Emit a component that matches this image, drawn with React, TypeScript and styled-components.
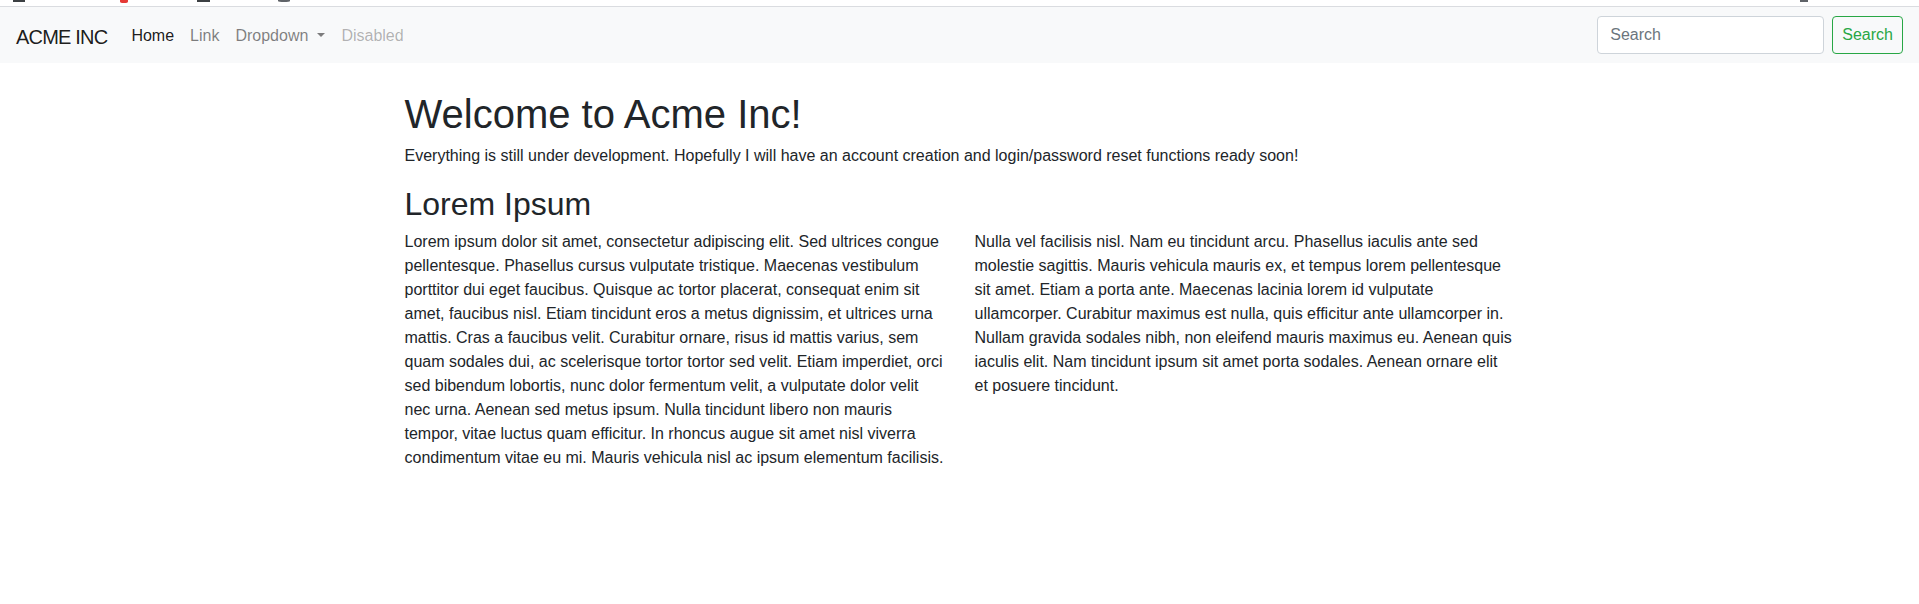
import React from "react";
import styled, { createGlobalStyle } from "styled-components";

const GlobalStyle = createGlobalStyle`
  *, *::before, *::after { box-sizing: border-box; }
  html, body { margin: 0; padding: 0; background: #fff; }
  body {
    font-family: "Segoe UI", "Liberation Sans", Arial, sans-serif;
    font-size: 16px;
    line-height: 1.5;
    color: #212529;
  }
`;

const TopStrip = styled.div`
  height: 7px;
  border-bottom: 1px solid #dadce0;
  display: flex;
  align-items: flex-start;
  overflow: hidden;
  background: #fff;
`;

const StripBit = styled.span<{ $w: number; $ml: number; $c: string; $h?: number; $round?: boolean }>`
  display: block;
  width: ${(p) => p.$w}px;
  height: ${(p) => p.$h ?? 2}px;
  margin-left: ${(p) => p.$ml}px;
  background: ${(p) => p.$c};
  border-radius: ${(p) => (p.$round ? "0 0 50% 50%" : "0")};
`;

const Navbar = styled.nav`
  height: 56px;
  background: #f8f9fa;
  padding: 8px 16px;
  display: flex;
  align-items: center;
`;

const Brand = styled.a`
  font-size: 20px;
  letter-spacing: -0.8px;
  line-height: 30px;
  padding: 7px 0 3px;
  margin-right: 16px;
  color: rgba(0, 0, 0, 0.9);
  text-decoration: none;
  white-space: nowrap;
`;

const NavList = styled.ul`
  display: flex;
  list-style: none;
  margin: 0;
  padding: 0;
  flex: 1;
`;

const NavLink = styled.a<{ $state?: "active" | "disabled" }>`
  display: flex;
  align-items: center;
  padding: 9px 8px 7px;
  line-height: 24px;
  text-decoration: none;
  white-space: nowrap;
  color: ${(p) =>
    p.$state === "active"
      ? "rgba(0,0,0,0.9)"
      : p.$state === "disabled"
      ? "rgba(0,0,0,0.3)"
      : "rgba(0,0,0,0.5)"};
`;

const Caret = styled.span`
  display: inline-block;
  margin-left: 9px;
  margin-top: -2px;
  width: 0;
  height: 0;
  border-top: 4px solid currentColor;
  border-left: 4px solid transparent;
  border-right: 4px solid transparent;
`;

const SearchForm = styled.form`
  display: flex;
  align-items: center;
`;

const SearchInput = styled.input`
  width: 227px;
  height: 38px;
  margin-right: 8px;
  padding: 6px 12px;
  font: inherit;
  font-size: 16px;
  color: #495057;
  background: #fff;
  border: 1px solid #ced4da;
  border-radius: 4px;
  outline: none;
  &::placeholder {
    color: #6c757d;
  }
`;

const OutlineButton = styled.button`
  height: 38px;
  padding: 0 9px;
  font: inherit;
  font-size: 16px;
  color: #28a745;
  background: transparent;
  border: 1px solid #28a745;
  border-radius: 4px;
`;

const Container = styled.main`
  max-width: 1140px;
  margin: 0 auto;
  padding: 27px 15px 0;
`;

const Title = styled.h1`
  font-size: 40px;
  font-weight: 400;
  line-height: 48px;
  margin: 0 0 6px;
`;

const Lead = styled.p`
  margin: 0 0 17px;
`;

const Subtitle = styled.h2`
  font-size: 32px;
  font-weight: 400;
  line-height: 38.4px;
  margin: 0 0 7px;
`;

const Row = styled.div`
  display: grid;
  grid-template-columns: 1fr 1fr;
  margin: 0 -15px;
`;

const Col = styled.p`
  margin: 0;
  padding: 0 15px;
`;

export default function App() {
  return (
    <>
      <GlobalStyle />
      <TopStrip>
        <StripBit $w={12} $ml={13} $c="#3c4043" />
        <StripBit $w={8} $ml={95} $c="#e53935" $h={3} $round />
        <StripBit $w={13} $ml={69} $c="#3c4043" />
        <StripBit $w={12} $ml={68} $c="#5f6368" $h={2} $round />
        <StripBit $w={8} $ml={1510} $c="#5f6368" />
      </TopStrip>
      <Navbar>
        <Brand href="#">ACME INC</Brand>
        <NavList>
          <li>
            <NavLink href="#" $state="active">Home</NavLink>
          </li>
          <li>
            <NavLink href="#">Link</NavLink>
          </li>
          <li>
            <NavLink href="#">
              Dropdown
              <Caret />
            </NavLink>
          </li>
          <li>
            <NavLink href="#" $state="disabled">Disabled</NavLink>
          </li>
        </NavList>
        <SearchForm onSubmit={(e) => e.preventDefault()}>
          <SearchInput type="search" placeholder="Search" aria-label="Search" />
          <OutlineButton type="submit">Search</OutlineButton>
        </SearchForm>
      </Navbar>
      <Container>
        <Title>Welcome to Acme Inc!</Title>
        <Lead>
          Everything is still under development. Hopefully I will have an account creation and
          login/password reset functions ready soon!
        </Lead>
        <Subtitle>Lorem Ipsum</Subtitle>
        <Row>
          <Col>
            Lorem ipsum dolor sit amet, consectetur adipiscing elit. Sed ultrices congue
            pellentesque. Phasellus cursus vulputate tristique. Maecenas vestibulum porttitor dui
            eget faucibus. Quisque ac tortor placerat, consequat enim sit amet, faucibus nisl.
            Etiam tincidunt eros a metus dignissim, et ultrices urna mattis. Cras a faucibus velit.
            Curabitur ornare, risus id mattis varius, sem quam sodales dui, ac scelerisque tortor
            tortor sed velit. Etiam imperdiet, orci sed bibendum lobortis, nunc dolor fermentum
            velit, a vulputate dolor velit nec urna. Aenean sed metus ipsum. Nulla tincidunt
            libero non mauris tempor, vitae luctus quam efficitur. In rhoncus augue sit amet nisl
            viverra condimentum vitae eu mi. Mauris vehicula nisl ac ipsum elementum facilisis.
          </Col>
          <Col>
            Nulla vel facilisis nisl. Nam eu tincidunt arcu. Phasellus iaculis ante sed molestie
            sagittis. Mauris vehicula mauris ex, et tempus lorem pellentesque sit amet. Etiam a
            porta ante. Maecenas lacinia lorem id vulputate ullamcorper. Curabitur maximus est
            nulla, quis efficitur ante ullamcorper in. Nullam gravida sodales nibh, non eleifend
            mauris maximus eu. Aenean quis iaculis elit. Nam tincidunt ipsum sit amet porta
            sodales. Aenean ornare elit et posuere tincidunt.
          </Col>
        </Row>
      </Container>
    </>
  );
}
